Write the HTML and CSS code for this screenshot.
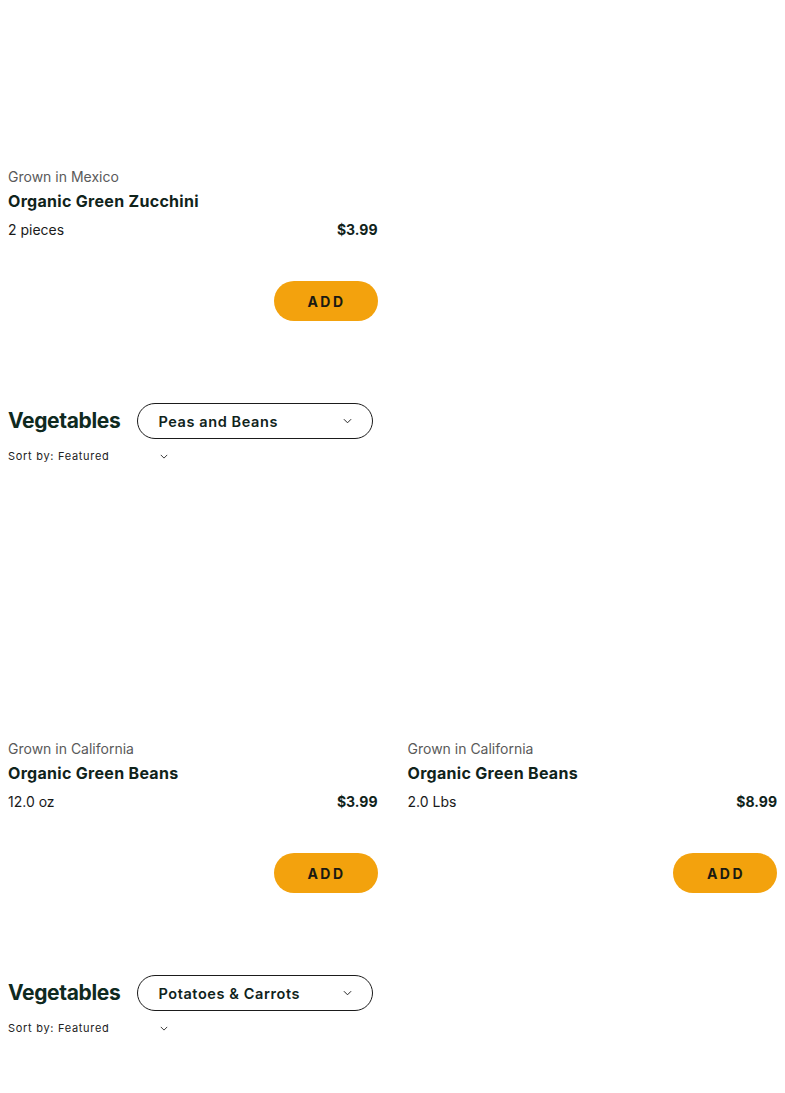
FILE: index.html
```html
<!DOCTYPE html>
<html>
<head>
<meta charset="utf-8">
<link rel="stylesheet" href="styles.css">
</head>
<body>
<main class="page">
  <section class="section">
    <div class="grid">
      <article class="card">
        <div class="card-img card-img--cut"></div>
        <div class="origin">Grown in Mexico</div>
        <div class="name">Organic Green Zucchini</div>
        <div class="meta"><span class="qty">2 pieces</span><span class="price">$3.99</span></div>
        <div class="actions"><button class="add">ADD</button></div>
      </article>
    </div>
  </section>

  <section class="section">
    <div class="section-head">
      <h2 class="section-title">Vegetables</h2>
      <button class="dropdown"><span>Peas and Beans</span><svg class="chev" viewBox="0 0 10 6" width="9" height="6"><path d="M1 1l4 4 4-4" fill="none" stroke="#222" stroke-width="1.1"/></svg></button>
    </div>
    <div class="sort"><span>Sort by: Featured</span><svg class="chev-sm" viewBox="0 0 10 6" width="8" height="5"><path d="M1 1l4 4 4-4" fill="none" stroke="#222" stroke-width="1.1"/></svg></div>
    <div class="grid">
      <article class="card">
        <div class="card-img"></div>
        <div class="origin">Grown in California</div>
        <div class="name">Organic Green Beans</div>
        <div class="meta"><span class="qty">12.0 oz</span><span class="price">$3.99</span></div>
        <div class="actions"><button class="add">ADD</button></div>
      </article>
      <article class="card">
        <div class="card-img"></div>
        <div class="origin">Grown in California</div>
        <div class="name">Organic Green Beans</div>
        <div class="meta"><span class="qty">2.0 Lbs</span><span class="price">$8.99</span></div>
        <div class="actions"><button class="add">ADD</button></div>
      </article>
    </div>
  </section>

  <section class="section">
    <div class="section-head">
      <h2 class="section-title">Vegetables</h2>
      <button class="dropdown"><span>Potatoes &amp; Carrots</span><svg class="chev" viewBox="0 0 10 6" width="9" height="6"><path d="M1 1l4 4 4-4" fill="none" stroke="#222" stroke-width="1.1"/></svg></button>
    </div>
    <div class="sort"><span>Sort by: Featured</span><svg class="chev-sm" viewBox="0 0 10 6" width="8" height="5"><path d="M1 1l4 4 4-4" fill="none" stroke="#222" stroke-width="1.1"/></svg></div>
  </section>
</main>
</body>
</html>
```

FILE: styles.css
```css
* { box-sizing: border-box; }
html, body { background: #fff; }
body {
  margin: 8px;
  font-family: Inter, "Liberation Sans", sans-serif;
  color: #10231b;
}
.page {
  display: flex;
  flex-direction: column;
}
.section {
  display: flex;
  flex-direction: column;
  padding-bottom: 82px;
}
.section-head {
  display: flex;
  align-items: center;
  gap: 17px;
  height: 36px;
}
.section-title {
  margin: 0;
  font-size: 21px;
  font-weight: 700;
  color: #0f2a1f;
  letter-spacing: -0.35px;
  line-height: 36px;
}
.dropdown {
  width: 236px;
  height: 36px;
  border: 1px solid #1b1b1b;
  border-radius: 18px;
  background: #fff;
  display: flex;
  align-items: center;
  justify-content: space-between;
  padding: 0 20px 0 20px;
  font-family: inherit;
  font-size: 14.5px;
  font-weight: 600;
  letter-spacing: 0.6px;
  color: #10231b;
}
.chev { display: block; }
.sort {
  margin-top: 9px;
  height: 16px;
  display: flex;
  align-items: center;
  font-size: 11px;
  letter-spacing: 0.7px;
  color: #222;
}
.sort span { width: 152px; }
.chev-sm { display: block; }
.grid {
  display: grid;
  grid-template-columns: 1fr 1fr;
  column-gap: 30px;
}
.card {
  display: flex;
  flex-direction: column;
}
.card-img {
  height: 275px;
}
.card-img--cut {
  height: 159px;
}
.origin {
  font-size: 14px;
  line-height: 20px;
  color: #5a5a5a;
  letter-spacing: 0;
}
.name {
  margin-top: 2px;
  font-size: 16px;
  line-height: 24px;
  font-weight: 700;
  color: #10231b;
  letter-spacing: 0.3px;
}
.meta {
  margin-top: 7px;
  display: flex;
  justify-content: space-between;
  font-size: 14px;
  line-height: 20px;
  color: #1a1a1a;
}
.price {
  font-weight: 700;
  color: #10231b;
}
.actions {
  margin-top: 41px;
  display: flex;
  justify-content: flex-end;
}
.add {
  width: 104px;
  height: 40px;
  border: none;
  border-radius: 20px;
  background: #f3a20d;
  font-family: inherit;
  font-size: 14px;
  font-weight: 700;
  letter-spacing: 2.5px;
  color: #1a1a12;
  padding: 0 0 0 2px;
}
```
